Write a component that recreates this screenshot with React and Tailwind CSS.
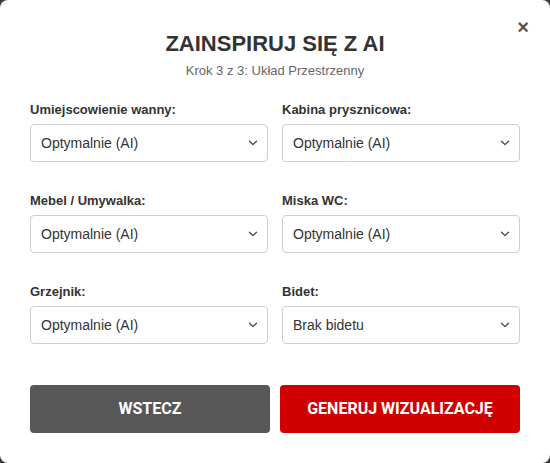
import { useState } from "react";

const fields = [
  { id: "wanna", label: "Umiejscowienie wanny:", options: ["Optymalnie (AI)", "Pod oknem", "Przy ścianie", "Brak wanny"] },
  { id: "kabina", label: "Kabina prysznicowa:", options: ["Optymalnie (AI)", "W narożniku", "Walk-in", "Brak kabiny"] },
  { id: "mebel", label: "Mebel / Umywalka:", options: ["Optymalnie (AI)", "Pod oknem", "Przy drzwiach"] },
  { id: "wc", label: "Miska WC:", options: ["Optymalnie (AI)", "Przy oknie", "Przy drzwiach"] },
  { id: "grzejnik", label: "Grzejnik:", options: ["Optymalnie (AI)", "Pod oknem", "Przy drzwiach"] },
  { id: "bidet", label: "Bidet:", options: ["Brak bidetu", "Optymalnie (AI)"] },
];

function Chevron() {
  return (
    <svg className="pointer-events-none absolute right-[10px] top-1/2 -translate-y-1/2" width="10" height="6" viewBox="0 0 10 6" fill="none">
      <path d="M1.5 1.2 L5 4.6 L8.5 1.2" stroke="#444" strokeWidth="1.3" strokeLinecap="round" strokeLinejoin="round" />
    </svg>
  );
}

export default function App() {
  const [values, setValues] = useState(
    Object.fromEntries(fields.map((f) => [f.id, f.options[0]]))
  );

  return (
    <div className="w-[550px] h-[463px] bg-[#3a3a3a]" style={{ fontFamily: '"Liberation Sans", Arial, sans-serif' }}>
      <div className="relative w-full h-full bg-white rounded-[8px] px-[30px] pt-[31px]">
        <button className="absolute right-[21px] top-[17px] text-[#555] text-[20px] font-bold leading-none">×</button>

        <h2 className="text-center text-[22px] font-bold text-[#333] leading-[26px]">ZAINSPIRUJ SIĘ Z AI</h2>
        <p className="text-center text-[13px] text-[#666] mt-[6px] leading-[16px]">Krok 3 z 3: Układ Przestrzenny</p>

        {/* pola */}
        <div className="grid grid-cols-2 gap-x-[14px] gap-y-[31px] mt-[23px]">
          {fields.map((f) => (
            <div key={f.id} className="flex flex-col">
              <label className="text-[13px] font-bold text-[#333] leading-[16px] mb-[6px]">{f.label}</label>
              <div className="relative">
                <select
                  value={values[f.id]}
                  onChange={(e) => setValues({ ...values, [f.id]: e.target.value })}
                  className="appearance-none w-full h-[38px] border border-[#cfcfcf] rounded-[4px] pl-[10px] pr-7 text-[14px] text-[#333] bg-white outline-none"
                  style={{ fontFamily: '"Liberation Sans", Arial, sans-serif' }}
                >
                  {f.options.map((o) => (
                    <option key={o}>{o}</option>
                  ))}
                </select>
                <Chevron />
              </div>
            </div>
          ))}
        </div>

        {/* przyciski */}
        <div className="flex gap-[10px] mt-[41px]" style={{ fontFamily: 'Roboto, "Liberation Sans", sans-serif' }}>
          <button className="flex-1 h-[48px] rounded-[4px] bg-[#575757] text-white text-[16px] font-bold">WSTECZ</button>
          <button className="flex-1 h-[48px] rounded-[4px] bg-[#d10000] text-white text-[16px] font-bold">GENERUJ WIZUALIZACJĘ</button>
        </div>
      </div>
    </div>
  );
}
